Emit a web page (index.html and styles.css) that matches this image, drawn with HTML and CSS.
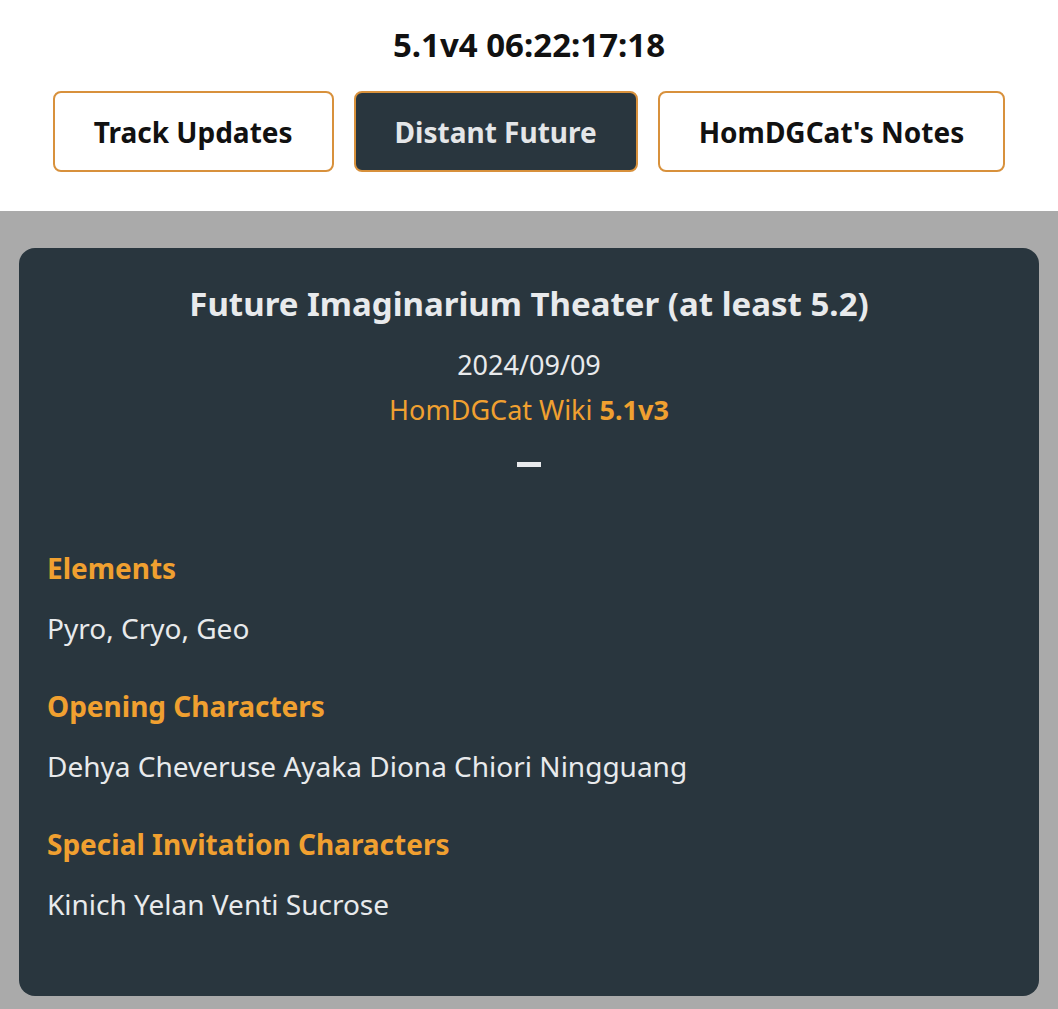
FILE: index.html
```html
<!DOCTYPE html>
<html>
<head>
<meta charset="utf-8">
<link rel="stylesheet" href="styles.css">
</head>
<body>
<header class="top">
  <div class="clock">5.1v4 06:22:17:18</div>
  <nav class="tabs">
    <button class="tab">Track Updates</button>
    <button class="tab active">Distant Future</button>
    <button class="tab">HomDGCat's Notes</button>
  </nav>
</header>
<main class="stage">
  <section class="card">
    <h1 class="title">Future Imaginarium Theater (at least 5.2)</h1>
    <div class="date">2024/09/09</div>
    <div class="source">HomDGCat Wiki <b>5.1v3</b></div>
    <div class="dash"></div>
    <h2 class="label">Elements</h2>
    <p class="value">Pyro, Cryo, Geo</p>
    <h2 class="label">Opening Characters</h2>
    <p class="value">Dehya Cheveruse Ayaka Diona Chiori Ningguang</p>
    <h2 class="label">Special Invitation Characters</h2>
    <p class="value">Kinich Yelan Venti Sucrose</p>
  </section>
</main>
</body>
</html>
```
FILE: styles.css
```css
* { box-sizing: border-box; }
html, body { margin: 0; padding: 0; }
body {
  font-family: "Noto Sans", "Open Sans", sans-serif;
  background: #aaaaaa;
  height: 1009px;
  overflow: hidden;
}
.top {
  background: #ffffff;
  height: 211px;
  display: flex;
  flex-direction: column;
  align-items: center;
  padding-top: 25px;
}
.clock {
  font-size: 33px;
  font-weight: 700;
  color: #111;
  line-height: 40px;
}
.tabs {
  display: flex;
  gap: 20px;
  margin-top: 26px;
}
.tab {
  font-family: inherit;
  font-size: 28px;
  font-weight: 700;
  height: 81px;
  padding: 0 39px;
  background: #ffffff;
  color: #111;
  border: 2px solid #d8913c;
  border-radius: 8px;
}
.tab.active {
  background: #29363e;
  color: #e4e6e8;
}
.stage {
  padding: 37px 19px 0 19px;
}
.card {
  background: #29363e;
  border-radius: 16px;
  height: 748px;
  padding: 28px 28px;
  color: #e8eaec;
}
.title {
  margin: 0;
  text-align: center;
  font-size: 33px;
  font-weight: 700;
  line-height: 56px;
  color: #e8eaec;
}
.date {
  text-align: center;
  font-size: 27px;
  line-height: 45px;
  margin-top: 10px;
}
.source {
  text-align: center;
  font-size: 27px;
  line-height: 45px;
  color: #f0a030;
}
.source b { font-weight: 700; }
.dash {
  width: 24px;
  height: 5px;
  background: #e8eaec;
  margin: 30px auto 0;
}
.label {
  margin: 83px 0 0;
  font-size: 28px;
  font-weight: 700;
  color: #f0a030;
  line-height: 36px;
}
.label ~ .label { margin-top: 42px; }
.value {
  margin: 24px 0 0;
  font-size: 28px;
  line-height: 36px;
}
```
